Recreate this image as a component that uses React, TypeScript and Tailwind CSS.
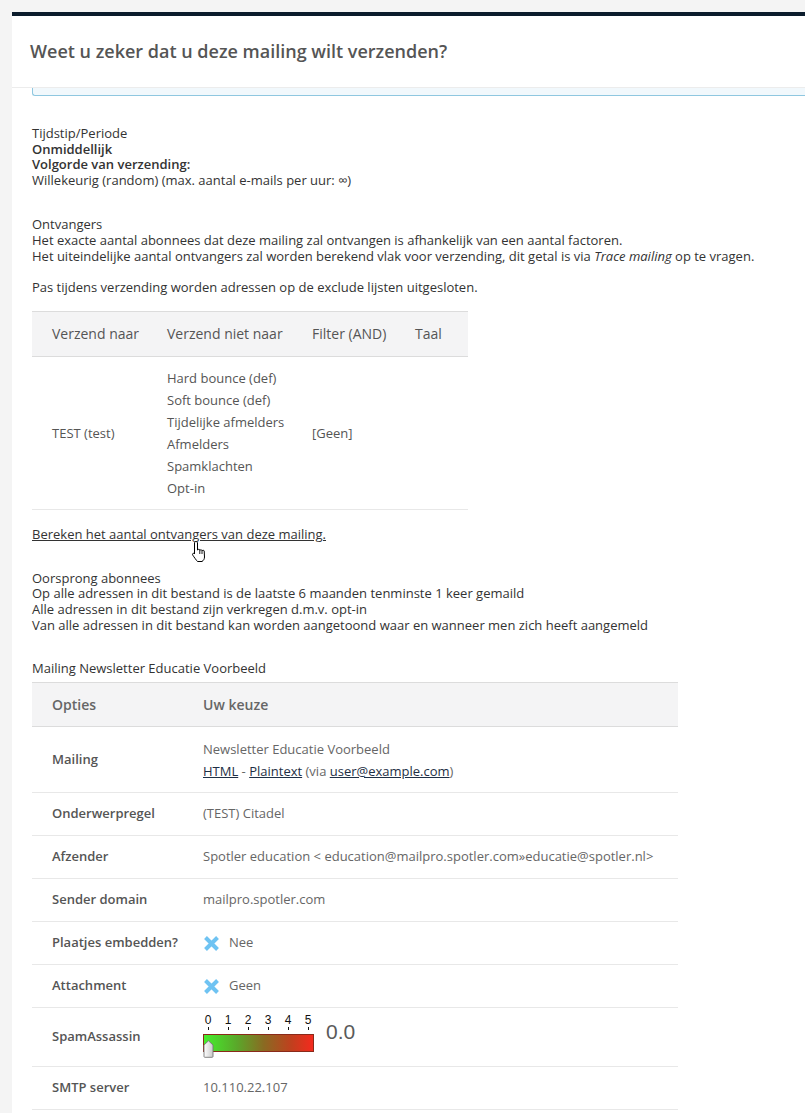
import React from "react";

const XIcon = () => (
  <svg width="17" height="17" viewBox="0 0 17 17" className="shrink-0">
    <path d="M2.5 2.5 L14.5 14.5 M14.5 2.5 L2.5 14.5" stroke="#6fc3f2" strokeWidth="4" strokeLinecap="butt" />
  </svg>
);

const Cursor = () => (
  <svg width="16" height="24" viewBox="0 0 16 24" className="absolute left-[159px] top-[13px]">
    <path
      d="M5 1.5 C5.8 1.5 6.5 2.2 6.5 3 L6.5 10 L7 10 C7 9 8.6 9 8.8 10 L8.8 10.5 C9 9.5 10.8 9.5 11 10.5 L11 11 C11.2 10 13 10 13.2 11 L13.5 17 C13.5 19 12.5 20.5 11 21.5 L6.5 21.5 C5.5 20.5 3 17 1.8 15.2 C1 14 2 12.8 3.2 13.5 L3.5 14 L3.5 3 C3.5 2.2 4.2 1.5 5 1.5 Z"
      fill="#fff"
      stroke="#000"
      strokeWidth="1"
      strokeLinejoin="round"
    />
    <path d="M8.8 10.5 L8.8 14 M11 11 L11 14" stroke="#000" strokeWidth="0.9" />
  </svg>
);

const SpamMeter = () => {
  const nums = ["0", "1", "2", "3", "4", "5"];
  return (
    <div className="flex items-start gap-[12px]">
      <div className="relative w-[111px] h-[44px]">
        <div className="absolute left-[0px] top-[0px] w-[111px] h-[14px]">
          {nums.map((n, i) => (
            <div
              key={n}
              className="absolute top-0 flex flex-col items-center"
              style={{ left: `${i * 20}px`, width: "10px" }}
            >
              <span className="text-[12px] leading-[11px] text-[#111]" style={{ fontFamily: "Arial, 'Liberation Sans', sans-serif" }}>{n}</span>
              <span className="w-px h-[3px] bg-[#111] mt-[1px]" />
            </div>
          ))}
        </div>
        <div className="absolute left-0 top-[19px] w-[111px] h-[18px] border border-[#8a2a1a] bg-[linear-gradient(to_right,#44ee2c_0%,#5aa82a_30%,#8a6a22_55%,#c0401e_80%,#f42a1e_100%)]" />
        <div className="absolute left-[0px] top-[25px] w-[11px] h-[18px]">
          <svg width="11" height="18" viewBox="0 0 11 18">
            <defs>
              <linearGradient id="hg" x1="0" x2="1" y1="0" y2="0">
                <stop offset="0" stopColor="#ffffff" />
                <stop offset="1" stopColor="#c8c8c8" />
              </linearGradient>
            </defs>
            <path d="M1 5 L5.5 0.8 L10 5 L10 16.5 Q10 17.3 9 17.3 L2 17.3 Q1 17.3 1 16.5 Z" fill="url(#hg)" stroke="#777" strokeWidth="0.9" />
          </svg>
        </div>
      </div>
      <span className="text-[21px] leading-[20px] text-[#5a5a5a] mt-[7px]" style={{ fontFamily: "Arial, 'Liberation Sans', sans-serif" }}>0.0</span>
    </div>
  );
};

export default function App() {
  const rows: { label: string; h: string; content: React.ReactNode }[] = [
    {
      label: "Mailing",
      h: "h-[66px]",
      content: (
        <div className="leading-[22px]">
          <div>Newsletter Educatie Voorbeeld</div>
          <div>
            <span className="underline text-[#1e2f45]">HTML</span> -{" "}
            <span className="underline text-[#1e2f45]">Plaintext</span> (via{" "}
            <span className="underline text-[#1e2f45]">user@example.com</span>)
          </div>
        </div>
      ),
    },
    { label: "Onderwerpregel", h: "h-[43px]", content: "(TEST) Citadel" },
    {
      label: "Afzender",
      h: "h-[43px]",
      content: "Spotler education < education@mailpro.spotler.com»educatie@spotler.nl>",
    },
    { label: "Sender domain", h: "h-[43px]", content: "mailpro.spotler.com" },
    {
      label: "Plaatjes embedden?",
      h: "h-[43px]",
      content: (
        <div className="flex items-center gap-[9px]">
          <XIcon />
          <span>Nee</span>
        </div>
      ),
    },
    {
      label: "Attachment",
      h: "h-[43px]",
      content: (
        <div className="flex items-center gap-[9px]">
          <XIcon />
          <span>Geen</span>
        </div>
      ),
    },
    { label: "SpamAssassin", h: "h-[59px]", content: <SpamMeter /> },
    { label: "SMTP server", h: "h-[43px]", content: "10.110.22.107" },
  ];

  return (
    <div
      className="w-[805px] h-[1113px] overflow-hidden bg-[#f4f4f4] pt-[12px]"
      style={{ fontFamily: "'Open Sans', 'Noto Sans', sans-serif" }}
    >
      <div className="ml-[12px] w-[820px] bg-white min-h-[1200px]">
        <div className="h-[4px] bg-[#0b1c2c]" />
        <div className="h-[72px] flex items-center pl-[18px] border-b border-[#ececec]">
          <h1 className="text-[18px] font-semibold text-[#555]">
            Weet u zeker dat u deze mailing wilt verzenden?
          </h1>
        </div>
        <div className="ml-[20px] h-[8px] bg-[#f1f8fc] border-l border-b border-[#8fc7e0] rounded-bl-[3px]" />

        <div className="pl-[20px] pt-[30px] text-[13px] leading-[15.7px] text-[#333]">
          <div>Tijdstip/Periode</div>
          <div className="font-semibold">Onmiddellijk</div>
          <div className="font-semibold">Volgorde van verzending:</div>
          <div>Willekeurig (random) (max. aantal e-mails per uur: ∞)</div>

          <div className="mt-[28.6px]">Ontvangers</div>
          <div>Het exacte aantal abonnees dat deze mailing zal ontvangen is afhankelijk van een aantal factoren.</div>
          <div>
            Het uiteindelijke aantal ontvangers zal worden berekend vlak voor verzending, dit getal is via{" "}
            <i>Trace mailing</i> op te vragen.
          </div>
          <div className="mt-[15.7px]">Pas tijdens verzending worden adressen op de exclude lijsten uitgesloten.</div>

          <div className="mt-[15px] w-[436px] text-[#555]">
            <div className="flex h-[46px] items-center bg-[#f4f4f5] border-t border-b border-[#dcdcdc] text-[14px]">
              <div className="w-[123px] pl-[20px]">Verzend naar</div>
              <div className="w-[145px] pl-[12px]">Verzend niet naar</div>
              <div className="w-[103px] pl-[12px]">Filter (AND)</div>
              <div className="pl-[12px]">Taal</div>
            </div>
            <div className="flex items-center h-[153px] border-b border-[#e8e8e8] leading-[22px]">
              <div className="w-[123px] pl-[20px]">TEST (test)</div>
              <div className="w-[145px] pl-[12px]">
                <div>Hard bounce (def)</div>
                <div>Soft bounce (def)</div>
                <div>Tijdelijke afmelders</div>
                <div>Afmelders</div>
                <div>Spamklachten</div>
                <div>Opt-in</div>
              </div>
              <div className="w-[103px] pl-[12px]">[Geen]</div>
              <div className="pl-[12px]"></div>
            </div>
          </div>

          <div className="relative mt-[17px]">
            <span className="underline">Bereken het aantal ontvangers van deze mailing.</span>
            <Cursor />
          </div>

          <div className="mt-[28px]">Oorsprong abonnees</div>
          <div>Op alle adressen in dit bestand is de laatste 6 maanden tenminste 1 keer gemaild</div>
          <div>Alle adressen in dit bestand zijn verkregen d.m.v. opt-in</div>
          <div>Van alle adressen in dit bestand kan worden aangetoond waar en wanneer men zich heeft aangemeld</div>

          <div className="mt-[28px]">Mailing Newsletter Educatie Voorbeeld</div>

          <div className="mt-[5px] w-[646px] text-[#555]">
            <div className="flex h-[45px] items-center bg-[#f4f4f5] border-t border-b border-[#dcdcdc] text-[14px] font-semibold text-[#666]">
              <div className="w-[151px] pl-[20px]">Opties</div>
              <div className="pl-[20px]">Uw keuze</div>
            </div>
            {rows.map((r) => (
              <div key={r.label} className={`flex items-center border-b border-[#e8e8e8] ${r.h}`}>
                <div className="w-[151px] pl-[20px] font-semibold text-[#555]">{r.label}</div>
                <div className="pl-[20px] text-[#666]">{r.content}</div>
              </div>
            ))}
          </div>
        </div>
      </div>
    </div>
  );
}
